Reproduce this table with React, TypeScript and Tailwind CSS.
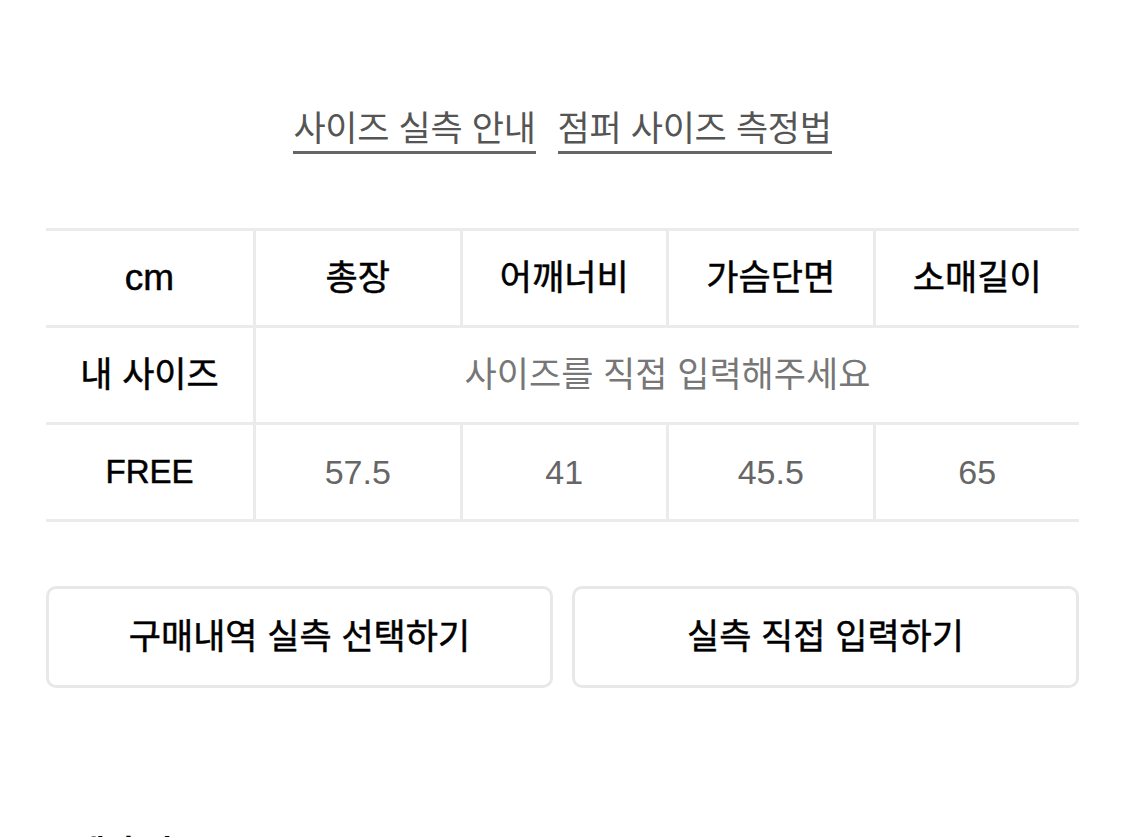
const FONT = "font-['Liberation_Sans','Noto_Sans_CJK_KR',sans-serif]";
const MEDIUM = "[-webkit-text-stroke:0.5px_currentColor]";

const HEADERS = ["총장", "어깨너비", "가슴단면", "소매길이"];
const FREE_SIZES = ["57.5", "41", "45.5", "65"];

export default function App() {
  return (
    <div className={`${FONT} bg-white min-h-screen px-[46px] pt-[111px] text-black`}>
      {/* Guide links */}
      <div className="flex justify-center gap-[22px]">
        <a className="text-[35px] leading-none text-[#555] border-b-[3px] border-[#666] pb-[5px] tracking-[-0.3px]">
          사이즈 실측 안내
        </a>
        <a className="text-[35px] leading-none text-[#555] border-b-[3px] border-[#666] pb-[5px] tracking-[-0.3px]">
          점퍼 사이즈 측정법
        </a>
      </div>

      {/* Size table */}
      <div className="mt-[74px] border-t-[3px] border-[#ebebeb]">
        <div className="flex h-[97px] border-b-[3px] border-[#ebebeb]">
          <div className={`w-[207px] shrink-0 flex items-center justify-center text-[37px] ${MEDIUM}`}>cm</div>
          {HEADERS.map((h) => (
            <div
              key={h}
              className={`flex-1 flex items-center justify-center border-l-[3px] border-[#ebebeb] text-[35px] ${MEDIUM}`}
            >
              {h}
            </div>
          ))}
        </div>

        <div className="flex h-[97px] border-b-[3px] border-[#ebebeb]">
          <div className={`w-[207px] shrink-0 flex items-center justify-center text-[35px] ${MEDIUM}`}>내 사이즈</div>
          <div className="flex-1 flex items-center justify-center border-l-[3px] border-[#ebebeb] text-[35px] text-[#777]">
            사이즈를 직접 입력해주세요
          </div>
        </div>

        <div className="flex h-[97px] border-b-[3px] border-[#ebebeb]">
          <div className={`w-[207px] shrink-0 flex items-center justify-center text-[33px] ${MEDIUM}`}>FREE</div>
          {FREE_SIZES.map((v, i) => (
            <div
              key={i}
              className="flex-1 flex items-center justify-center border-l-[3px] border-[#ebebeb] text-[34px] text-[#666]"
            >
              {v}
            </div>
          ))}
        </div>
      </div>

      {/* Actions */}
      <div className="mt-[64px] flex gap-[19px]">
        <button className={`flex-1 h-[102px] rounded-[10px] border-[3px] border-[#e8e8e8] bg-white text-[35px] ${MEDIUM}`}>
          구매내역 실측 선택하기
        </button>
        <button className={`flex-1 h-[102px] rounded-[10px] border-[3px] border-[#e8e8e8] bg-white text-[35px] ${MEDIUM}`}>
          실측 직접 입력하기
        </button>
      </div>

      <h2 className="mt-[148px] text-[32px] font-bold leading-none">구매 후기</h2>
    </div>
  );
}
